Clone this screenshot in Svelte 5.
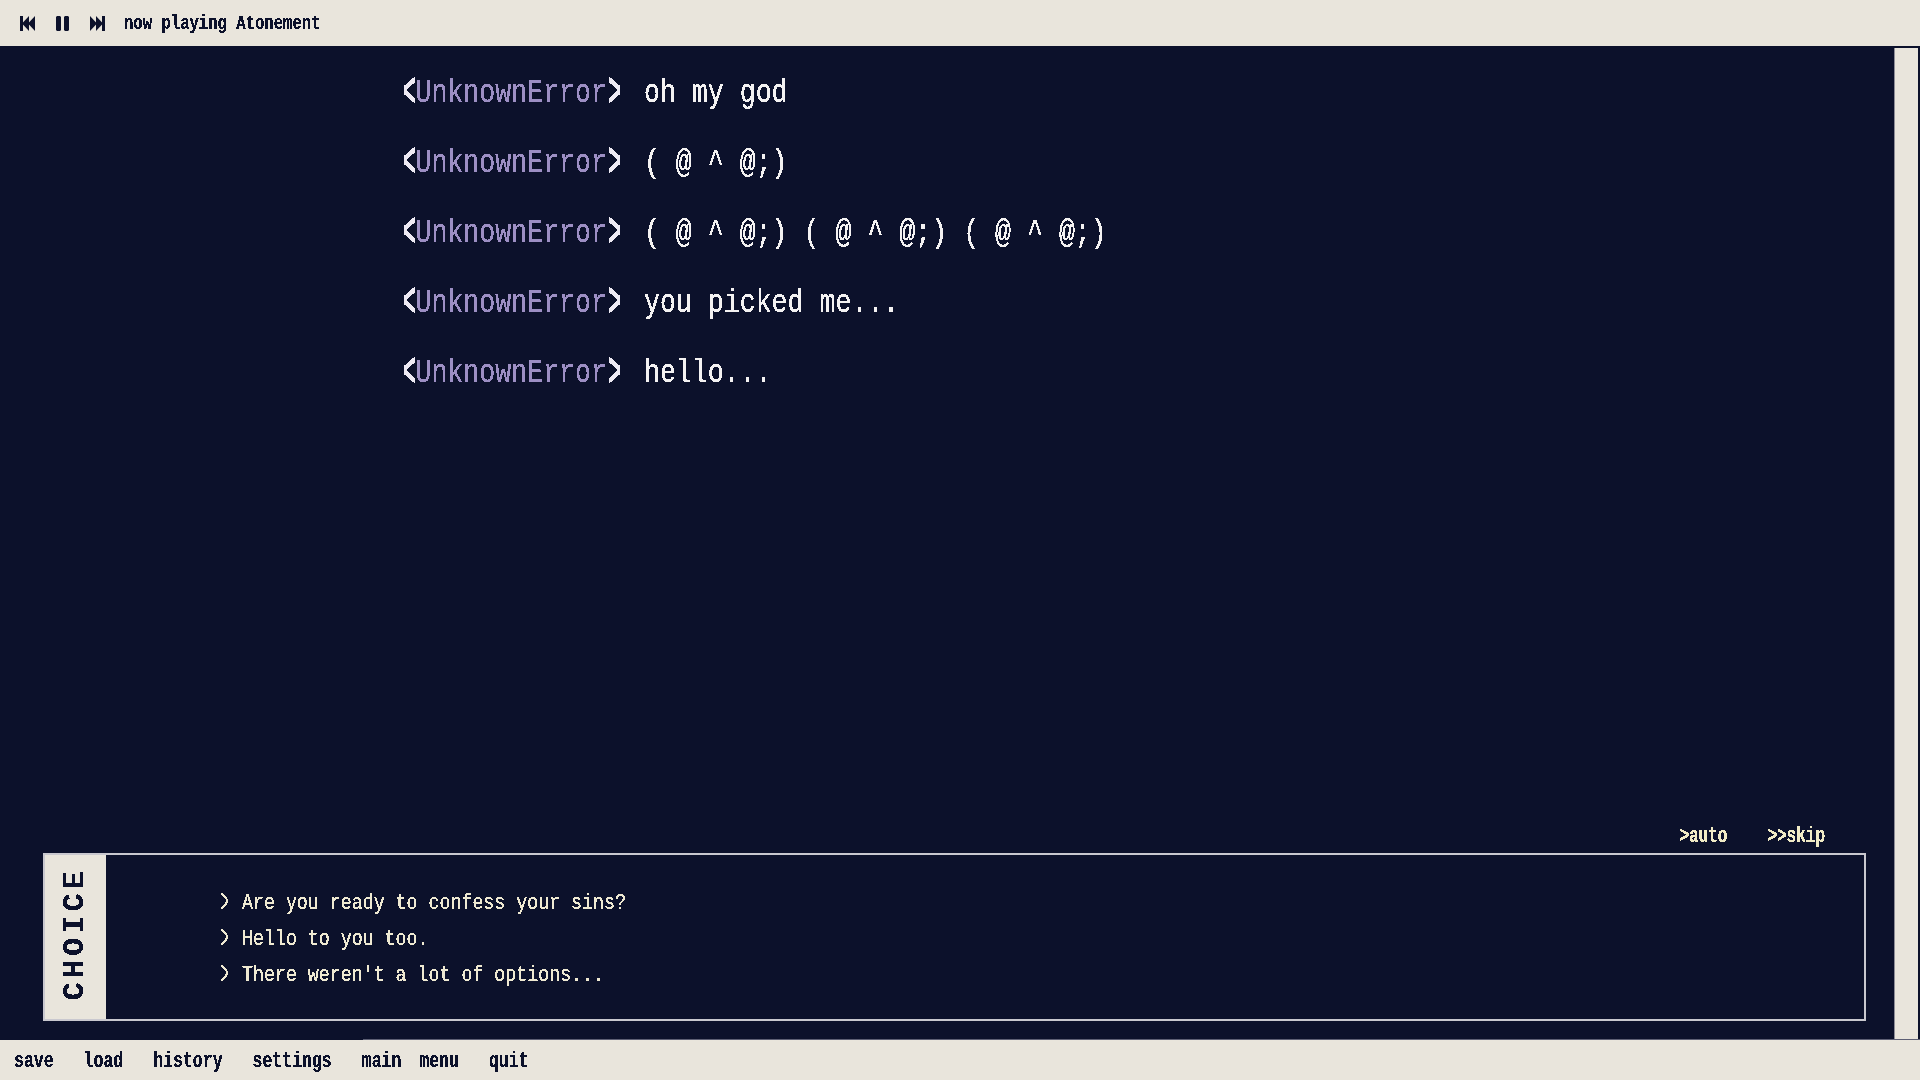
<script lang="ts">
  const lines = [
    'oh my god',
    '( @ ^ @;)',
    '( @ ^ @;) ( @ ^ @;) ( @ ^ @;)',
    'you picked me...',
    'hello...'
  ];
  const choices = [
    'Are you ready to confess your sins?',
    'Hello to you too.',
    "There weren't a lot of options..."
  ];
  const menu = ['save', 'load', 'history', 'settings', 'main menu', 'quit'];
</script>

<svg class="defs" width="0" height="0" aria-hidden="true">
  <filter id="crisp" color-interpolation-filters="sRGB" x="-5%" y="-20%" width="110%" height="140%">
    <feComponentTransfer>
      <feFuncA type="discrete" tableValues="0 1 1" />
    </feComponentTransfer>
  </filter>
</svg>

<div class="screen">
  <header class="topbar">
    <div class="player">
      <svg width="15" height="15" viewBox="0 0 15 15" aria-hidden="true">
        <path d="M0 0h3v15H0zM2 7.5 9 0v15zM8 7.5 15 0v15z" />
      </svg>
      <svg width="13" height="15" viewBox="0 0 13 15" aria-hidden="true">
        <path d="M1 0h3l1 1v13l-1 1H1l-1-1V1zM9 0h3l1 1v13l-1 1H9l-1-1V1z" />
      </svg>
      <svg width="15" height="15" viewBox="0 0 15 15" aria-hidden="true">
        <path d="M15 0h-3v15h3zM13 7.5 6 0v15zM7 7.5 0 0v15z" />
      </svg>
    </div>
    <span class="nowplaying pixel">now playing Atonement</span>
  </header>

  <div class="middle">
    <main class="stage">
      <div class="log">
        {#each lines as line}
          <div class="line">
            <span class="who pixel"><b class="open">&lt;</b>UnknownError<b>&gt;</b></span>
            <span class="said pixel">{line}</span>
          </div>
        {/each}
      </div>

      <div class="quick">
        <span class="pixel">&gt;auto</span>
        <span class="pixel">&gt;&gt;skip</span>
      </div>

      <section class="box">
        <div class="tab"><span>CHOICE</span></div>
        <ul class="choices">
          {#each choices as c}
            <li class="pixel"><i>&gt;</i>{c}</li>
          {/each}
        </ul>
      </section>
    </main>
    <div class="scrollbar"></div>
  </div>

  <footer class="menu">
    {#each menu as item}
      <span class="pixel">{item}</span>
    {/each}
  </footer>
</div>

<style>
  :global(body) {
    margin: 0;
    background: #0c112b;
  }
  .defs {
    position: absolute;
  }
  .screen {
    width: 1920px;
    height: 1080px;
    display: flex;
    flex-direction: column;
    overflow: hidden;
    background: #0c112b;
    font-family: "Liberation Mono", "DejaVu Sans Mono", monospace;
  }
  .pixel {
    display: inline-block;
    white-space: pre;
    filter: url(#crisp);
  }

  .topbar {
    height: 46px;
    flex: none;
    display: flex;
    align-items: center;
    padding-left: 20px;
    background: #e9e5dc;
    color: #0c112b;
  }
  .player {
    display: flex;
    align-items: center;
    gap: 21px;
    width: 104px;
  }
  .player svg {
    fill: #0c112b;
    flex: none;
  }
  .nowplaying {
    font-size: 15.6px;
    font-weight: 700;
    padding-top: 1px;
    transform: scaleY(1.3);
  }

  .middle {
    flex: 1;
    min-height: 0;
    display: flex;
    padding: 2px 2px 1px 0;
  }
  .stage {
    flex: 1;
    min-width: 0;
    display: flex;
    flex-direction: column;
    padding: 0 28px 18px 43px;
  }
  .scrollbar {
    width: 23px;
    background: #e9e5dc;
    border-left: 1px solid #8f8e98;
  }

  .log {
    flex: 1;
    padding: 10px 0 0 359px;
  }
  .line {
    height: 70px;
    display: flex;
    align-items: center;
    gap: 21px;
    font-size: 26.6px;
  }
  .line span {
    transform: scaleY(1.25);
  }
  .who {
    color: #9d8fc4;
  }
  .who b {
    display: inline-block;
    color: #eeeaf4;
    font-weight: 700;
    transform: scale(0.8, 1.45);
  }
  .who b.open {
    margin-right: -2.5px;
    transform-origin: 20% 50%;
  }
  .said {
    color: #f4f2f2;
  }

  .quick {
    display: flex;
    justify-content: flex-end;
    gap: 40px;
    padding: 7px 41px 0 0;
    height: 31px;
    box-sizing: border-box;
    color: #f1ebc6;
  }
  .quick span {
    font-size: 16px;
    font-weight: 700;
    transform: scaleY(1.35);
  }

  .box {
    height: 168px;
    box-sizing: border-box;
    display: flex;
    border: 2px solid #c9c8cf;
  }
  .tab {
    width: 61px;
    flex: none;
    background: #e9e5dc;
    display: flex;
    align-items: center;
    justify-content: center;
    padding: 0 2px 6px 0;
    box-sizing: border-box;
  }
  .tab span {
    writing-mode: vertical-rl;
    transform: rotate(180deg);
    font-size: 30px;
    font-weight: 700;
    letter-spacing: 4.2px;
    color: #0c112b;
    filter: url(#crisp);
  }
  .choices {
    list-style: none;
    margin: 0;
    padding: 30px 0 0 115px;
    color: #efe9d2;
    font-size: 18.3px;
  }
  .choices li {
    display: block;
    height: 36px;
    line-height: 36px;
    transform: scaleY(1.2);
  }
  .choices i {
    font-style: normal;
    display: inline-block;
    width: 21px;
    transform: scale(0.7, 1.5);
    transform-origin: 0 50%;
  }

  .menu {
    position: relative;
    height: 40px;
    flex: none;
    display: flex;
    align-items: center;
    gap: 30px;
    padding-left: 14px;
    background: #e9e5dc;
    color: #0c112b;
    font-size: 16.5px;
    font-weight: 700;
    word-spacing: 8px;
    box-sizing: border-box;
  }
  .menu::before {
    content: "";
    position: absolute;
    top: -1px;
    left: 363px;
    right: 0;
    height: 1px;
    background: #5d5f74;
  }
  .menu span {
    transform: scaleY(1.35);
  }
</style>
